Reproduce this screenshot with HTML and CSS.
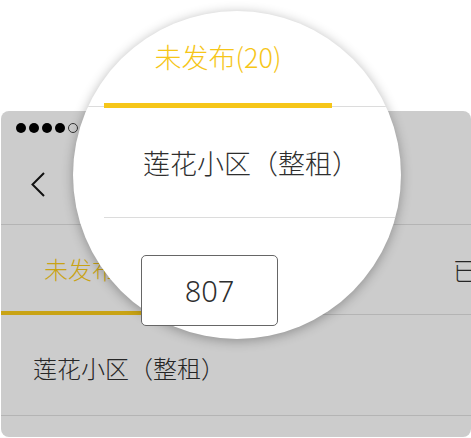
FILE: index.html
```html
<!DOCTYPE html>
<html lang="zh">
<head>
<meta charset="utf-8">
<link rel="stylesheet" href="styles.css">
</head>
<body>
<div class="stage">
  <div class="phone">
    <div class="status">
      <span class="dot"></span><span class="dot"></span><span class="dot"></span><span class="dot"></span><span class="dot hollow"></span>
    </div>
    <div class="nav">
      <svg class="back" width="14" height="25" viewBox="0 0 14 25"><polyline points="13,1 1.5,12.5 13,24" fill="none" stroke="#111" stroke-width="2"/></svg>
    </div>
    <div class="tabs">
      <div class="tab active">未发布(20)</div>
      <div class="tab">已发布(12)</div>
    </div>
    <div class="row">莲花小区（整租）</div>
  </div>
  <div class="lens">
    <div class="lens-tabs"><div class="lens-tab">未发布(20)</div></div>
    <div class="lens-row">莲花小区（整租）</div>
  </div>
  <div class="qty">807</div>
</div>
</body>
</html>
```

FILE: styles.css
```css
* { box-sizing: border-box; }
html, body { margin: 0; padding: 0; background: #fff; }
body { font-family: "Noto Sans CJK SC", "Noto Sans", sans-serif; font-weight: 300; }
.stage { position: relative; width: 471px; height: 438px; overflow: hidden; background: #fff; }
.phone {
  margin: 111px 0 0 1px;
  width: 470px;
  height: 326px;
  background: #cccccc;
  border-radius: 8px;
  overflow: hidden;
}
.status { height: 34px; padding-left: 15px; display: flex; align-items: center; gap: 3px; }
.dot { width: 10px; height: 10px; border-radius: 50%; background: #000; }
.dot.hollow { background: transparent; border: 1px solid #333; }
.nav { height: 80px; border-bottom: 1px solid #b4b4b4; display: flex; align-items: center; padding-left: 30px; }
.back { display: block; }
.tabs { display: flex; height: 90px; border-bottom: 1px solid #b4b4b4; }
.tab { width: 199px; flex: none; display: flex; align-items: center; justify-content: center; font-size: 24px; color: #262626; white-space: nowrap; }
.tab + .tab { margin-left: 210px; }
.tab.active { color: #c9a314; border-bottom: 4px solid #c9a314; margin-bottom: -1px; }
.row { height: 101px; border-bottom: 1px solid #b4b4b4; display: flex; align-items: center; padding: 4px 0 0 32px; font-size: 24px; color: #262626; }
.lens {
  position: absolute;
  left: 73px;
  top: 11px;
  width: 328px;
  height: 328px;
  border-radius: 50%;
  background: #fff;
  overflow: hidden;
  box-shadow: 0 2px 12px rgba(0,0,0,0.3);
}
.lens-tabs { display: flex; height: 96px; border-bottom: 1px solid #dcdcdc; padding-left: 31px; }
.lens-tab {
  width: 228px; flex: none; display: flex; align-items: center; justify-content: center;
  border-bottom: 5px solid #f6c619; margin-bottom: -2px; padding-bottom: 2px;
  font-size: 27px; color: #f6c619; white-space: nowrap;
}
.lens-row {
  margin-left: 31px; height: 111px; border-bottom: 1px solid #dcdcdc;
  display: flex; align-items: center; padding-left: 39px;
  font-size: 27px; color: #2e2e2e; white-space: nowrap;
}
.qty {
  position: absolute; left: 141px; top: 255px; width: 137px; height: 71px;
  border: 1px solid #666; border-radius: 5px; background: #fff;
  display: flex; align-items: center; justify-content: center;
  font-size: 29px; color: #2e2e2e; font-family: "Noto Sans", sans-serif; font-weight: 300;
}
```
